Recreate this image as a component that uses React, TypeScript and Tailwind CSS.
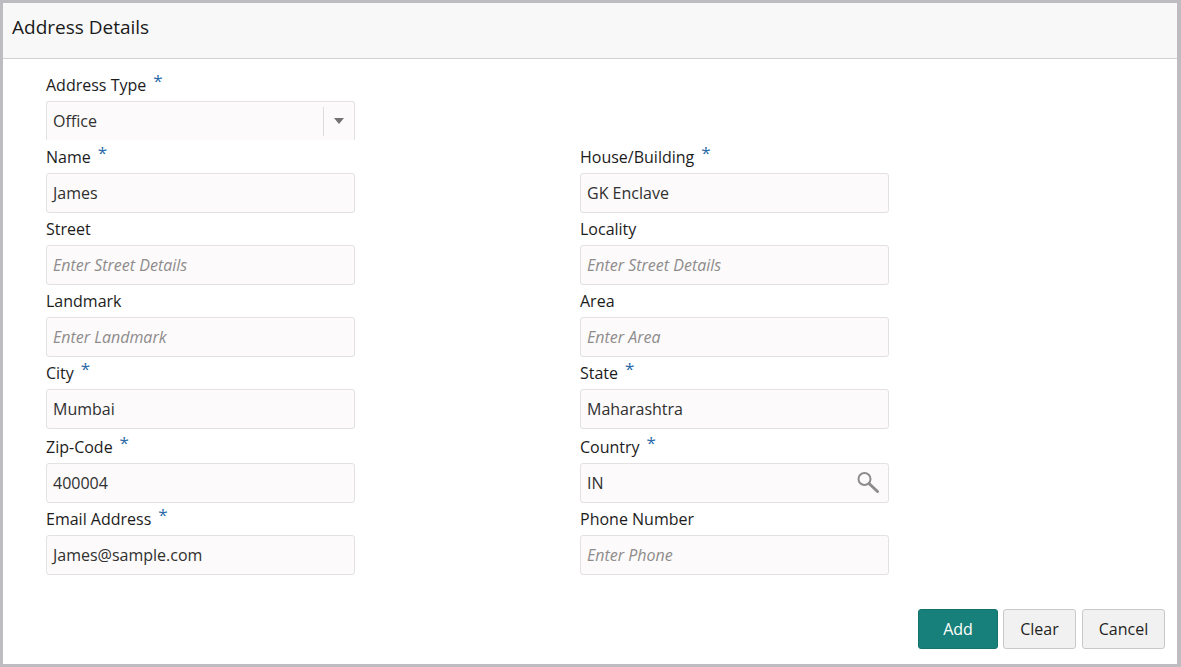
import React from "react";

type Field = { label: string; required?: boolean; value?: string; placeholder?: string; search?: boolean };

const rows: [Field, Field][] = [
  [{ label: "Name", required: true, value: "James" }, { label: "House/Building", required: true, value: "GK Enclave" }],
  [{ label: "Street", placeholder: "Enter Street Details" }, { label: "Locality", placeholder: "Enter Street Details" }],
  [{ label: "Landmark", placeholder: "Enter Landmark" }, { label: "Area", placeholder: "Enter Area" }],
  [{ label: "City", required: true, value: "Mumbai" }, { label: "State", required: true, value: "Maharashtra" }],
  [{ label: "Zip-Code", required: true, value: "400004" }, { label: "Country", required: true, value: "IN", search: true }],
  [{ label: "Email Address", required: true, value: "James@sample.com" }, { label: "Phone Number", placeholder: "Enter Phone" }],
];

function Label({ text, required }: { text: string; required?: boolean }) {
  return (
    <div className="flex h-[32px] items-center text-[16px] text-[#1c1c1c]">
      <span>{text}</span>
      {required && <span className="ml-[7px] -mt-[10px] text-[17px] leading-none text-[#2a6aa8]">*</span>}
    </div>
  );
}

function SearchIcon() {
  return (
    <svg width="26" height="24" viewBox="0 0 26 24" fill="none">
      <circle cx="8.5" cy="8" r="6" stroke="#8c8c8c" strokeWidth="2" />
      <path d="M13 12.5 L21.5 20.5" stroke="#8c8c8c" strokeWidth="3" strokeLinecap="round" />
    </svg>
  );
}

function Input({ field }: { field: Field }) {
  return (
    <div className="flex h-[40px] w-[309px] items-center rounded-[3px] border border-[#e3e1e1] bg-[#fcfafa] px-[6px] text-[16px]">
      {field.value ? (
        <span className="flex-1 text-[#303030]">{field.value}</span>
      ) : (
        <span className="flex-1 italic text-[#8e8c8c]">{field.placeholder}</span>
      )}
      {field.search && <SearchIcon />}
    </div>
  );
}

export default function App() {
  return (
    <div className="h-[667px] w-[1181px] overflow-hidden bg-[#bdbdc1] pb-[3px] pl-[3px] pr-[4px] pt-[3px]" style={{ fontFamily: '"Open Sans", sans-serif' }}>
      <div className="flex h-full flex-col bg-white">
        <div className="flex h-[56px] items-center border-b border-[#d2d2d2] bg-[#f8f8f8] pb-[6px] pl-[9px] text-[19px] text-[#1a1a1a]">
          Address Details
        </div>
        <div className="flex-1 pl-[43px] pt-[10px]">
          <Label text="Address Type" required />
          <div className="flex h-[39px] w-[309px] items-center rounded-t-[3px] border border-b-0 border-[#e3e1e1] bg-[#fcfafa] pl-[6px] text-[16px] text-[#303030]">
            <span className="flex-1">Office</span>
            <div className="h-[29px] w-px bg-[#dcdcdc]" />
            <div className="flex w-[30px] justify-center">
              <svg width="10" height="6" viewBox="0 0 10 6"><path d="M0 0 H10 L5 6 Z" fill="#737373" /></svg>
            </div>
          </div>
          <div className="mt-[1px] flex flex-col">
            {rows.map(([a, b], i) => (
              <div key={a.label} className={i === 4 ? "mt-[2px] grid grid-cols-[534px_309px]" : "grid grid-cols-[534px_309px]"}>
                <div>
                  <Label text={a.label} required={a.required} />
                  <Input field={a} />
                </div>
                <div>
                  <Label text={b.label} required={b.required} />
                  <Input field={b} />
                </div>
              </div>
            ))}
          </div>
        </div>
        <div className="flex justify-end gap-[5px] pb-[15px] pr-[12px]">
          <button className="h-[40px] w-[80px] rounded-[3px] border border-[#14726d] bg-[#18807a] text-[16px] text-white">Add</button>
          <button className="h-[40px] w-[73px] rounded-[3px] border border-[#c9c9c9] bg-[#f1f1f1] text-[16px] text-[#1f1f1f]">Clear</button>
          <button className="ml-[1px] h-[40px] w-[83px] rounded-[3px] border border-[#c9c9c9] bg-[#f1f1f1] text-[16px] text-[#1f1f1f]">Cancel</button>
        </div>
      </div>
    </div>
  );
}
